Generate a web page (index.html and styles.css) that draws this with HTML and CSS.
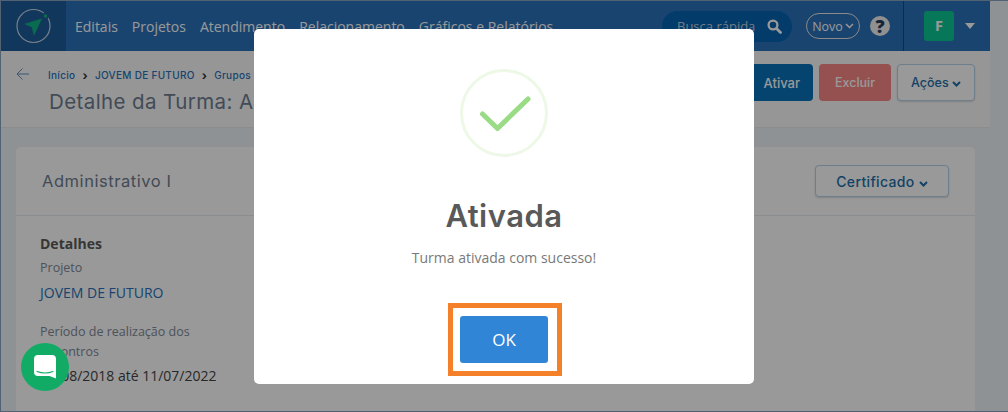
FILE: index.html
```html
<!DOCTYPE html>
<html lang="pt-BR">
<head>
    <title>Detalhe da Turma</title>
    <meta charset="UTF-8">
    <meta name="viewport" content="width=device-width, initial-scale=1">
    <link rel="stylesheet" href="styles.css">
</head>
<body>

<div class="page">
    <header class="topbar">
        <div class="logo">
            <svg width="65" height="50" viewBox="0 0 65 50">
                <circle cx="32.500" cy="25" r="16.500" fill="none" stroke="#fff" stroke-opacity=".75" stroke-width="1.200"/>
                <circle cx="44.500" cy="15" r="2.500" fill="#0fb585" stroke="#1f5d99" stroke-width="1.500"/>
                <path d="M24 23 L40.500 18 L33 34 L31 26 Z" fill="#0fb585" stroke="#0fb585" stroke-width=".6" stroke-linejoin="round"/>
            </svg>
        </div>
        <nav class="menu">
            <a href="#">Editais</a>
            <a href="#">Projetos</a>
            <a href="#">Atendimento</a>
            <a href="#">Relacionamento</a>
            <a href="#">Gráficos e Relatórios</a>
        </nav>
        <div class="search">
            <span>Busca rápida</span>
            <svg width="15" height="15" viewBox="0 0 15 15"><circle cx="6" cy="6" r="4.400" fill="none" stroke="#fff" stroke-width="2.300"/><path d="M9.500 9.500 L13.500 13.500" stroke="#fff" stroke-width="2.800" stroke-linecap="round"/></svg>
        </div>
        <div class="novo">Novo
            <svg width="9" height="6" viewBox="0 0 9 6"><path d="M1 1 L4.500 4.500 L8 1" fill="none" stroke="#fff" stroke-width="1.500"/></svg>
        </div>
        <div class="help">?</div>
        <div class="user">
            <div class="avatar">F</div>
            <span class="caret"></span>
        </div>
    </header>

    <section class="subbar">
        <svg class="back" width="13" height="12" viewBox="0 0 13 12"><path d="M13 6 H1 M6.500 .5 L1 6 L6.500 11.500" fill="none" stroke="#5f8fc0" stroke-width="1"/></svg>
        <div class="heading">
            <div class="crumbs">
                <a href="#">Início</a><b>&rsaquo;</b><a href="#">JOVEM DE FUTURO</a><b>&rsaquo;</b><a href="#">Grupos de Turmas</a>
            </div>
            <h1>Detalhe da Turma: Administrativo I</h1>
        </div>
        <div class="actions">
            <button class="btn btn-blue">Ativar</button>
            <button class="btn btn-red">Excluir</button>
            <button class="btn btn-line">Ações
                <svg width="9" height="6" viewBox="0 0 9 6"><path d="M1 1 L4.500 4.500 L8 1" fill="none" stroke="#1e6fa8" stroke-width="2"/></svg>
            </button>
        </div>
    </section>

    <section class="card">
        <div class="card-head">
            <h2>Administrativo I</h2>
            <button class="btn btn-line btn-cert">Certificado
                <svg width="9" height="6" viewBox="0 0 9 6"><path d="M1 1 L4.500 4.500 L8 1" fill="none" stroke="#1e6fa8" stroke-width="2"/></svg>
            </button>
        </div>
        <div class="card-body">
            <h3>Detalhes</h3>
            <p class="label">Projeto</p>
            <p class="link">JOVEM DE FUTURO</p>
            <p class="label label-wide">Período de realização dos encontros</p>
            <p class="value">12/08/2018 até 11/07/2022</p>
        </div>
    </section>
</div>

<div class="chat">
    <svg width="22" height="24" viewBox="0 0 22 24">
        <path d="M4 0 H18 Q22 0 22 4 V23.500 L15.500 21 H4 Q0 21 0 17 V4 Q0 0 4 0 Z" fill="#fff"/>
        <path d="M3 16.500 Q11 19.500 19 16.500" fill="none" stroke="#11ab66" stroke-width="1.100" stroke-linecap="round"/>
    </svg>
</div>

<div class="overlay">
    <div class="modal">
        <svg class="tick" width="88" height="88" viewBox="0 0 88 88">
            <circle cx="44" cy="44" r="42.500" fill="none" stroke="#edf8e7" stroke-width="3"/>
            <path d="M22.500 45 L37.500 59.500 L68 30" fill="none" stroke="#99dc85" stroke-width="5" stroke-linecap="round" stroke-linejoin="round"/>
        </svg>
        <h2 class="modal-title">Ativada</h2>
        <p class="modal-text">Turma ativada com sucesso!</p>
        <div class="mark">
            <button class="ok">OK</button>
        </div>
    </div>
</div>

</body>
</html>
```
FILE: styles.css
```css
* {
  box-sizing: border-box;
}

html, body {
  height: 100%;
}

body {
  margin: 0;
  height: 412px;
  overflow: hidden;
  font-family: "Open Sans", "Liberation Sans", sans-serif;
  background: #eff3f7;
  border: 1px solid #8ba3c0;
  border-width: 1px 0 1px 1px;
}

.page {
  width: 989px;
  height: 100%;
}

/* Top bar */
.topbar {
  display: flex;
  align-items: center;
  height: 50px;
  background: #2a72b9;
  color: #fff;
}

.logo {
  width: 65px;
  height: 50px;
  background: #1f5d99;
}

.logo svg {
  display: block;
}

.menu {
  display: flex;
  gap: 14px;
  margin-left: 9px;
  width: 587px;
}

.menu a {
  color: #fff;
  font-size: 14px;
  text-decoration: none;
  white-space: nowrap;
}

.search {
  display: flex;
  align-items: center;
  justify-content: space-between;
  width: 130px;
  height: 31px;
  padding: 0 10px 0 15px;
  border-radius: 16px;
  background: #0564b2;
  color: #c4cfd9;
  font-size: 13px;
}

.novo {
  display: flex;
  align-items: center;
  gap: 2px;
  justify-content: center;
  width: 54px;
  height: 26px;
  margin-left: 14px;
  border: 1px solid #e6e6e6;
  border-radius: 13px;
  font-size: 12.500px;
}

.help {
  width: 20px;
  height: 20px;
  margin-left: 10px;
  border-radius: 50%;
  background: #f0f0f0;
  color: #1f3f60;
  font-size: 18px;
  font-weight: 800;
  line-height: 20px;
  text-align: center;
}

.user {
  display: flex;
  align-items: center;
  height: 50px;
  margin-left: 13px;
  padding-left: 20px;
  border-left: 1px solid #174a80;
}

.avatar {
  width: 30px;
  height: 30px;
  border-radius: 3px;
  background: #0bc995;
  font-size: 14.500px;
  font-weight: 700;
  line-height: 30px;
  text-align: center;
}

.caret {
  width: 0;
  height: 0;
  margin-left: 11px;
  border: 5.500px solid transparent;
  border-top: 6px solid #fff;
  border-bottom: 0;
}

/* Sub header */
.subbar {
  display: flex;
  height: 77px;
  padding: 13px 15px 0 15px;
  background: #fbfbfb;
  border-bottom: 1px solid #eaeaea;
}

.back {
  margin-top: 4px;
}

.heading {
  flex: 1;
  min-width: 0;
  margin-left: 19px;
  overflow: hidden;
}

.crumbs {
  display: flex;
  align-items: center;
  height: 16px;
  margin-top: 3px;
  font-family: Inter, "Liberation Sans", sans-serif;
  font-size: 10px;
  font-weight: 500;
  letter-spacing: .3px;
  white-space: nowrap;
}

.crumbs a {
  color: #2a72b9;
  text-decoration: none;
}

.crumbs b {
  margin: 0 7px;
  color: #333;
  font-size: 12px;
}

h1 {
  margin: 6px 0 0 1px;
  color: #6e7e91;
  font-family: Inter, "Liberation Sans", sans-serif;
  font-size: 20.500px;
  font-weight: 400;
  letter-spacing: .4px;
  white-space: nowrap;
}

.actions {
  display: flex;
  align-items: flex-start;
  gap: 6px;
}

.btn {
  height: 37px;
  border-radius: 4px;
  border: 0;
  font-family: Inter, "Liberation Sans", sans-serif;
  font-size: 12.500px;
  font-weight: 500;
}

.btn-blue {
  width: 70px;
  background: #0772b9;
  color: #fff;
  text-align: right;
  padding-right: 13px;
  font-size: 13px;
}

.btn-red {
  width: 72px;
  background: #f88785;
  color: #fff;
}

.btn-line {
  width: 78px;
  background: #fff;
  border: 1px solid #b6d3ea;
  color: #1e6fa8;
  box-shadow: 0 1px 2px rgba(0, 0, 0, .15);
}

/* Card */
.card {
  margin: 19px 15px 0;
  height: 280px;
  background: #fff;
  border-radius: 5px;
}

.card-head {
  display: flex;
  align-items: center;
  justify-content: space-between;
  height: 69px;
  padding: 0 26px;
  border-bottom: 1px solid #e8edf2;
}

.card-head h2 {
  margin: 0;
  color: #6e7e91;
  font-family: Inter, "Liberation Sans", sans-serif;
  font-size: 16.500px;
  font-weight: 400;
  letter-spacing: .55px;
}

.btn-cert {
  width: 134px;
  height: 32px;
  font-size: 14px;
  letter-spacing: .35px;
}

.card-body {
  padding: 18px 24px;
  width: 220px;
}

.card-body h3 {
  margin: 0;
  color: #5b5b5b;
  font-size: 14px;
  font-weight: 700;
}

.card-body p {
  margin: 0;
  font-size: 12.500px;
}

.label {
  color: #7e8a99;
  line-height: 20px;
}

.card-body .label {
  margin-top: 5px;
}

.card-body .link {
  margin-top: 4px;
  color: #2a72b9;
  font-size: 14px;
  line-height: 22px;
}

.card-body .label-wide {
  margin-top: 18px;
}

.card-body .value {
  margin-top: 3px;
  color: #444;
  font-size: 14px;
  line-height: 22px;
  white-space: nowrap;
}

/* Chat bubble */
.chat {
  position: fixed;
  left: 21px;
  top: 343px;
  display: flex;
  align-items: center;
  justify-content: center;
  width: 48px;
  height: 48px;
  border-radius: 50%;
  background: #11ab66;
  z-index: 20;
}

/* Modal */
.overlay {
  position: fixed;
  inset: 0;
  display: flex;
  justify-content: center;
  padding-top: 29px;
  background: rgba(0, 0, 0, .4);
  z-index: 10;
}

.modal {
  display: flex;
  flex-direction: column;
  align-items: center;
  width: 500px;
  height: 355px;
  padding-top: 40px;
  border-radius: 5px;
  background: #fff;
}

.tick {
  flex: none;
}

.modal-title {
  margin: 39px 0 0;
  color: #595959;
  font-family: Inter, "Liberation Sans", sans-serif;
  font-size: 31px;
  font-weight: 600;
  letter-spacing: .5px;
  line-height: 40px;
}

.modal-text {
  margin: 12px 0 0;
  color: #797979;
  font-size: 14px;
  line-height: 20px;
}

.mark {
  margin: 35px 0 0 2px;
  padding: 8px 9px 8px 7px;
  border: 5px solid #f5802a;
}

.ok {
  display: block;
  width: 88px;
  height: 47px;
  border: 0;
  border-radius: 3px;
  background: #3085d6;
  color: #fff;
  font-family: "Open Sans", sans-serif;
  font-size: 17px;
}
```
